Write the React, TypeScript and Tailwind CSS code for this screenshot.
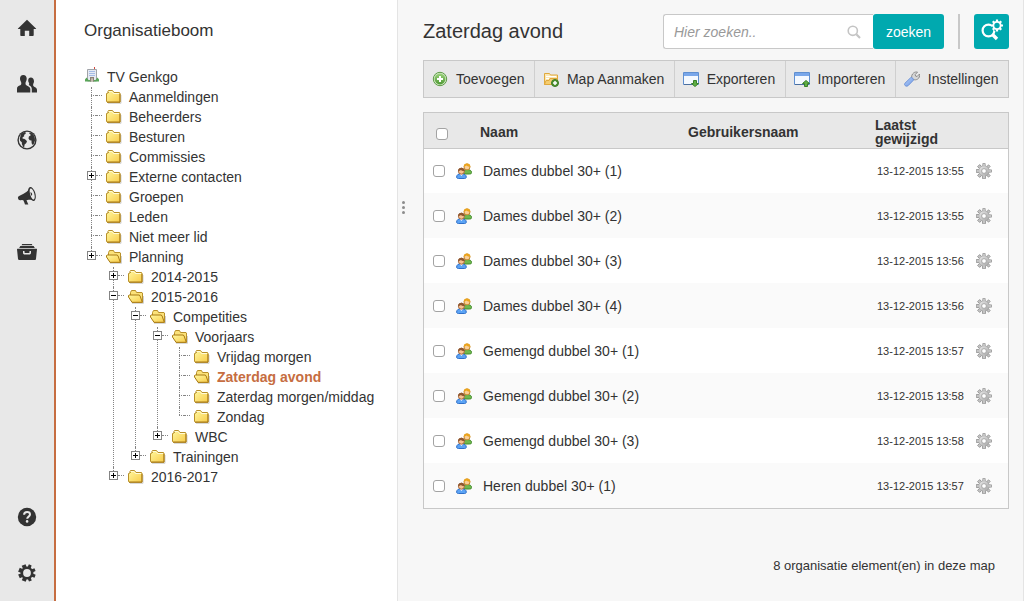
import React from 'react';

interface TreeNode {
    label: string;
    toggle?: 'plus' | 'minus';
    open?: boolean;
    selected?: boolean;
    children?: TreeNode[];
}

interface Team {
    name: string;
    modified: string;
}

const tree: TreeNode[] = [
    { label: 'Aanmeldingen' },
    { label: 'Beheerders' },
    { label: 'Besturen' },
    { label: 'Commissies' },
    { label: 'Externe contacten', toggle: 'plus' },
    { label: 'Groepen' },
    { label: 'Leden' },
    { label: 'Niet meer lid' },
    {
        label: 'Planning',
        toggle: 'plus',
        open: true,
        children: [
            { label: '2014-2015', toggle: 'plus' },
            {
                label: '2015-2016',
                toggle: 'minus',
                open: true,
                children: [
                    {
                        label: 'Competities',
                        toggle: 'minus',
                        open: true,
                        children: [
                            {
                                label: 'Voorjaars',
                                toggle: 'minus',
                                open: true,
                                children: [
                                    { label: 'Vrijdag morgen' },
                                    { label: 'Zaterdag avond', open: true, selected: true },
                                    { label: 'Zaterdag morgen/middag' },
                                    { label: 'Zondag' }
                                ]
                            },
                            { label: 'WBC', toggle: 'plus' }
                        ]
                    },
                    { label: 'Trainingen', toggle: 'plus' }
                ]
            },
            { label: '2016-2017', toggle: 'plus' }
        ]
    }
];

const teams: Team[] = [
    { name: 'Dames dubbel 30+ (1)', modified: '13-12-2015 13:55' },
    { name: 'Dames dubbel 30+ (2)', modified: '13-12-2015 13:55' },
    { name: 'Dames dubbel 30+ (3)', modified: '13-12-2015 13:56' },
    { name: 'Dames dubbel 30+ (4)', modified: '13-12-2015 13:56' },
    { name: 'Gemengd dubbel 30+ (1)', modified: '13-12-2015 13:57' },
    { name: 'Gemengd dubbel 30+ (2)', modified: '13-12-2015 13:58' },
    { name: 'Gemengd dubbel 30+ (3)', modified: '13-12-2015 13:58' },
    { name: 'Heren dubbel 30+ (1)', modified: '13-12-2015 13:57' }
];

/* Gradients shared by the coloured icons */
const IconDefs = () => (
    <svg width="0" height="0" className="absolute" aria-hidden="true">
        <defs>
            <linearGradient id="folder" x1="0" y1="0" x2="1" y2="1">
                <stop offset="0" stopColor="#fff8a0" />
                <stop offset="1" stopColor="#f8cc4a" />
            </linearGradient>
            <linearGradient id="steel" x1="0" y1="0" x2="1" y2="1">
                <stop offset="0" stopColor="#ececec" />
                <stop offset="1" stopColor="#a2a2a2" />
            </linearGradient>
            <linearGradient id="leaf" x1="0" y1="0" x2="0" y2="1">
                <stop offset="0" stopColor="#9bd27c" />
                <stop offset="1" stopColor="#4f9a34" />
            </linearGradient>
            <linearGradient id="sky" x1="0" y1="0" x2="1" y2="1">
                <stop offset="0" stopColor="#b9d2fa" />
                <stop offset="1" stopColor="#6c97e4" />
            </linearGradient>
        </defs>
    </svg>
);

const HomeIcon = () => (
    <svg viewBox="0 0 20 20" className="size-5" fill="#333">
        <path d="M10 1.8 1 10.4c-.3.4 0 .7.4.7h1.9v6.1c0 .5.3.8.8.8h3.7v-5.2h4.4V18h3.7c.5 0 .8-.3.8-.8v-6.1h1.9c.4 0 .7-.3.4-.7z" />
    </svg>
);

const UsersIcon = () => (
    <svg viewBox="0 0 20 20" className="size-5" fill="#333">
        <path d="M6.3 1C4.100 1 3 2.500 3 4.600c0 1 .2 2 .7 2.700.4.700.6 1.200.6 2.100 0 1.200-.5 1.700-1.700 2.200C1 12.300 0 13 0 14.700V18.500h13.300v-3.400c0-1.700-1.100-2.500-3.100-3.400-1.300-.6-1.700-1.100-1.700-2.300 0-.9.200-1.400.6-2.100.4-.7.600-1.700.6-2.700C9.700 2.500 8.500 1 6.300 1z" />
        <path d="M13.800 3.600c-1.600 0-2.600 1.200-2.600 2.900 0 .9.200 1.500.6 2.100.5.800.600 1.800-.1 2.500 2.100 1 3.100 2.200 3.100 4v3.400H20v-2.600c0-1.600-.8-2.300-2.400-3-1.100-.5-1.500-1-1.500-1.900 0-.8.200-1.300.5-1.900.3-.6.400-1.100.4-1.800 0-2.200-1.400-3.700-3.200-3.700z" />
    </svg>
);

const GlobeIcon = () => (
    <svg viewBox="0 0 20 20" className="size-5">
        <circle cx="10" cy="10" r="9.600" fill="#333" />
        <circle cx="10" cy="10" r="8.200" fill="#e8e8e8" />
        <path d="M4 4.200C5 3 6.500 2.200 8 1.900l1 1-.9 1.400-1.300.6.600 1-1.900 1.700.2 1.100 1.400.1 1.900 1.300 1 1.300-.9 1.900-1.500 1.200-.3 2.300-.9.500-1.500-3-.1-2.100-1.700-1.500-.3-2.300z" fill="#333" />
        <path d="M12.800 2.300c2.400.9 4.300 2.800 5 5.400l.2 2.900-1 2.900-1.300 1.500-1.100-1.800-.1-2.600-1.800-.4-1.200-1.600.4-2.200 1.700-1-.2-1.200-1.200-.4z" fill="#333" />
    </svg>
);

const MegaphoneIcon = () => (
    <svg viewBox="0 0 20 20" className="size-5">
        <path d="M13.500 1.300C12 4.500 8.500 7.500 2.600 9.700c-1.300.5-1.900 1.300-1.600 2.600.3 1.300 1 2 2.300 1.900l1.700-.2 1.300.2 1 2.200c.3.700.5 2.100 1.100 2.200h2.300c.6 0 .7-.4.3-.9l-1.500-3.500 1-.3c3.100-.5 5.600.1 7.100.8z" fill="#333" />
        <ellipse cx="14.900" cy="8" rx="3.500" ry="7.200" transform="rotate(-16 14.900 8)" fill="#333" />
        <ellipse cx="15.200" cy="8" rx="2.100" ry="5.600" transform="rotate(-16 15.200 8)" fill="#e8e8e8" />
        <path d="M13.300 6.200c1.700-.3 2.600 2.900 1 3.600z" fill="#333" />
    </svg>
);

const ArchiveIcon = () => (
    <svg viewBox="0 0 20 20" className="size-5" fill="#333">
        <path d="M5.200 2h9.600l.7 1.300h-11zM3.300 4h13.400l1.100 1.900H2.200zM.5 6.700h19c.4 0 .5.300.5.600l-1 9.500c-.1.800-.5 1.200-1.200 1.200H2.200c-.7 0-1.100-.4-1.200-1.200L0 7.300c0-.3.100-.6.5-.6zM6 9v1.500c0 1.400.6 2 1.900 2h4.200c1.300 0 1.900-.6 1.900-2V9h-1.500v1.200c0 .6-.2.8-.8.8H8.300c-.6 0-.8-.2-.8-.8V9z" />
    </svg>
);

const HelpIcon = () => (
    <svg viewBox="0 0 20 20" className="size-5">
        <circle cx="10" cy="10" r="9.200" fill="#333" />
        <path d="M7.100 7.800c0-1.700 1.300-2.700 3-2.700s2.900.9 2.900 2.400c0 2.200-2.800 2-2.800 4.300" fill="none" stroke="#e8e8e8" strokeWidth="2" />
        <circle cx="10.100" cy="14.400" r="1.300" fill="#e8e8e8" />
    </svg>
);

const CogIcon = () => (
    <svg viewBox="0 0 20 20" className="size-5">
        {[22, 67, 112, 157].map((angle) => (
            <path key={angle} d="M8.500 1.300h3l.6 17.400H7.900z" transform={`rotate(${angle} 10 10)`} fill="#333" />
        ))}
        <circle cx="10" cy="10" r="6.400" fill="#333" />
        <circle cx="10" cy="10" r="3.900" fill="#e8e8e8" />
    </svg>
);

const BuildingIcon = () => (
    <svg viewBox="0 0 14 15" className="h-[15px] w-3.5 shrink-0">
        <path d="M2.500 2.500h9V14h-9z" fill="#e6eaf2" stroke="#a0a3a8" />
        <path d="M4 4.500h6M4 6.500h6M4 8.500h6" stroke="#a5bce6" />
        <path d="M0 14.500v-2l1.500-2 2 2.500h7l2-2.500 1.500 2v2z" fill="#59a558" />
        <path d="M5 10h4v4.500H5z" fill="#8b8176" />
        <path d="M6.300 11.200h1.500V15H6.300z" fill="#d7d0c5" />
        <path d="M9.500 0v2" stroke="#d2473d" />
    </svg>
);

const FolderIcon = () => (
    <svg viewBox="0 0 16 14" className="h-3.5 w-4 shrink-0">
        <path d="M2 13.300h13V5" fill="none" stroke="#d0d0d0" />
        <path d="M.5 11.500v-8l1.500-.5 1-1.500-1 1V1l.5-.5h4L8 2.500h5.500l.5.500v9H1z" fill="url(#folder)" stroke="#b8902a" />
        <path d="M2.500 1.500H6l1.500 2h5.500" fill="none" stroke="#fffbd8" />
        <path d="M1 12.300h13V4" fill="none" stroke="#a87a15" />
    </svg>
);

const OpenFolderIcon = () => (
    <svg viewBox="0 0 16 14" className="h-3.5 w-4 shrink-0">
        <path d="M4 13.300h11.500V6" fill="none" stroke="#d0d0d0" />
        <path d="M2.500 7V2.500l1-2h4l1 2h5.500l.5.500v9.300H4z" fill="#fbe27a" stroke="#b8902a" />
        <path d="M.5 5.500 1 5h10l1 .7L14.300 12.300H4L.5 7z" fill="url(#folder)" stroke="#a87a15" />
    </svg>
);

const AddIcon = () => (
    <svg viewBox="0 0 16 16" className="size-4 shrink-0">
        <circle cx="8" cy="8" r="6.700" fill="#cfe6c2" stroke="#5d9c46" />
        <circle cx="8" cy="8" r="5.400" fill="url(#leaf)" />
        <path d="M8 5v6M5 8h6" stroke="#fff" strokeWidth="2" />
    </svg>
);

const FolderAddIcon = () => (
    <svg viewBox="0 0 16 16" className="size-4 shrink-0">
        <path d="M1.500 13.500v-11h5l1 1.500h7v9.500z" fill="#fbe7b4" stroke="#e0a93c" />
        <path d="M3 5.500h10M3 7.500h3" stroke="#fff" />
        <path d="M1.500 13.500 3 9.500h3l1-2h7.500v6z" fill="#f5cd70" stroke="#e0a93c" />
        <circle cx="12" cy="12" r="3.500" fill="#4f9333" stroke="#3c7a25" />
        <path d="M12 10v4M10 12h4" stroke="#fff" strokeWidth="1.500" />
    </svg>
);

const WindowIcon = ({ arrow }: { arrow: string }) => (
    <svg viewBox="0 0 16 16" className="size-4 shrink-0">
        <path d="M.5 1.500h15v12H.5z" fill="#f4f9ff" stroke="#5f8fd0" />
        <path d="M1 2h14v3H1z" fill="#79a7ea" />
        <path d="M1 13.500h14" stroke="#4b6f9f" />
        <path d={arrow} fill="#5fae43" stroke="#37802a" />
    </svg>
);

const WrenchIcon = () => (
    <svg viewBox="0 0 16 16" className="size-4 shrink-0">
        <path d="M8 8c-.9-2.200-.2-4.900 1.800-6.200 1.200-.8 2.400-1 3.700-.7L11.200 3.600l.4 1.500 1.500.4L15.500 3c.5 2.200-.3 4.100-1.900 5.100-1.300.8-2.600.9-3.800.5z" fill="#d7d7d7" stroke="#8b8b8b" />
        <path d="M1 12.200 6.700 6.700c1-.9 3.600 1.500 2.700 2.500L4.200 14.600c-1.900 1.700-4.900-.7-3.200-2.400z" fill="url(#sky)" stroke="#6f94d8" />
    </svg>
);

const TeamIcon = () => (
    <svg viewBox="0 0 16 16" className="size-4">
        <path d="M6.800 9.500c0-2 1.700-3 4.300-3s4.500 1 4.500 3c0 1.100-.8 1.500-2 1.500H8z" fill="#70b84e" stroke="#418a2c" />
        <circle cx="11" cy="3.900" r="3" fill="#f9cf98" stroke="#c98a2c" />
        <path d="M7.700 3.800C7.700 1.500 9 .4 11 .4s3.400 1.100 3.400 3.400c-1.500 0-3-.4-4.200-1.200-.5.700-1.400 1.200-2.500 1.200z" fill="#eba41c" />
        <path d="M.6 14.100c0-2.200 1.700-3.400 4.700-3.400s5 1.200 5 3.400c0 1.100-.9 1.400-2 1.400H2.500c-1.100 0-1.900-.3-1.900-1.400z" fill="#5ba3f5" stroke="#2d6fc9" />
        <path d="m3.800 11 1.600 2 1.600-2z" fill="#fff" />
        <circle cx="5.400" cy="8.200" r="3" fill="#f7c292" stroke="#a5683e" />
        <path d="M2 8.200c0-2.300 1.400-3.500 3.400-3.500s3.400 1.200 3.400 3.500C7.300 8.200 6 7.800 4.700 7c-.6.700-1.500 1.200-2.700 1.200z" fill="#8e5730" />
    </svg>
);

const GearIcon = () => (
    <svg viewBox="0 0 16 16" className="size-4">
        {[0, 45, 90, 135].map((angle) => (
            <path key={angle} d="M6.900.4h2.200l.4 15.200h-3z" transform={`rotate(${angle} 8 8)`} fill="#c4c4c4" stroke="#8e8e8e" strokeWidth=".8" />
        ))}
        <circle cx="8" cy="8" r="5.300" fill="url(#steel)" stroke="#a0a0a0" strokeWidth=".6" />
        <path d="M8 .8v3M8 12.200v3M.8 8h3M12.200 8h3" stroke="#c8c8c8" strokeWidth="1.600" />
        <circle cx="8" cy="8" r="2.400" fill="#fff" stroke="#a8a8a8" />
    </svg>
);

const SearchIcon = () => (
    <svg viewBox="0 0 14 14" className="size-3.5" fill="none" stroke="#c4c4c4">
        <circle cx="5.800" cy="5.800" r="4.600" strokeWidth="1.600" />
        <path d="m9.300 9.300 3.700 3.700" strokeWidth="2.200" />
    </svg>
);

const AdvancedSearchIcon = () => (
    <svg viewBox="0 0 24 24" className="size-6">
        <circle cx="8.500" cy="12.500" r="5.900" fill="none" stroke="#fff" strokeWidth="2.200" />
        <path d="m12.500 16.500 4.500 4.500" stroke="#fff" strokeWidth="3.400" />
        <circle cx="17" cy="7.500" r="5.800" fill="#00a9af" />
        {[0, 45, 90, 135].map((angle) => (
            <path key={angle} d="M15.900 1.500h2.200v12h-2.200z" transform={`rotate(${angle} 17 7.500)`} fill="#fff" />
        ))}
        <circle cx="17" cy="7.500" r="4.600" fill="#fff" />
        <circle cx="17" cy="7.500" r="2.700" fill="#00a9af" />
    </svg>
);

const RailButton = ({ label, children }: { label: string; children: React.ReactNode }) => (
    <button aria-label={label} className="flex h-14 w-full items-center justify-center">
        {children}
    </button>
);

const ToggleButton = ({ node }: { node: TreeNode }) => (
    <button aria-label={`${node.label} in- of uitklappen`} className="block size-[9px] bg-white">
        <svg viewBox="0 0 9 9" className="size-[9px]" shapeRendering="crispEdges">
            <path d="M.5.5h8v8h-8z" fill="none" stroke="#848484" />
            <path d={node.toggle === 'plus' ? 'M2 4.500h5M4.500 2v5' : 'M2 4.500h5'} stroke="#000" />
        </svg>
    </button>
);

const TreeList = ({ nodes }: { nodes: TreeNode[] }) => (
    <ul>
        {nodes.map((node, index) => (
            <li key={node.label} className="flex">
                <div className="flex w-[9px] shrink-0 flex-col">
                    <div className={`ml-1 border-l border-dotted border-[#848484] ${node.toggle ? 'h-1' : 'h-2'}`} />
                    {node.toggle ? (
                        <ToggleButton node={node} />
                    ) : (
                        <div className="ml-1 border-t border-dotted border-[#848484]" />
                    )}
                    {index < nodes.length - 1 && (
                        <div className="ml-1 flex-1 border-l border-dotted border-[#848484]" />
                    )}
                </div>
                <div>
                    <div className="flex h-5">
                        <div className="mt-2 w-1.5 border-t border-dotted border-[#848484]" />
                        <a
                            href="#"
                            className={`ml-1 flex gap-[7px] leading-5 whitespace-nowrap ${node.selected ? 'font-bold text-[#c66d41]' : ''}`}
                        >
                            <span className="mt-[3px]">{node.open ? <OpenFolderIcon /> : <FolderIcon />}</span>
                            {node.label}
                        </a>
                    </div>
                    {node.children && (
                        <div className="ml-[13px]">
                            <TreeList nodes={node.children} />
                        </div>
                    )}
                </div>
            </li>
        ))}
    </ul>
);

const ToolbarButton = ({ label, icon }: { label: string; icon: React.ReactNode }) => (
    <button className="flex flex-auto items-center gap-2 border-l border-[#cfcfcf] pl-2 whitespace-nowrap first:border-l-0">
        {icon}
        {label}
    </button>
);

const Checkbox = ({ label }: { label: string }) => (
    <input
        type="checkbox"
        aria-label={label}
        className="block size-3 appearance-none rounded-[3px] border border-[#a3a3a3] bg-white checked:bg-[#00a9af]"
    />
);

export default function App() {
    return (
        <div className="flex min-h-screen bg-[#f7f7f7] font-['Liberation_Sans',Arial,sans-serif] text-sm text-[#333]">
            <IconDefs />
            <nav className="flex w-14 shrink-0 flex-col justify-between border-r-2 border-[#c66d41] bg-[#e8e8e8]">
                <div>
                    <RailButton label="Home"><HomeIcon /></RailButton>
                    <RailButton label="Leden"><UsersIcon /></RailButton>
                    <RailButton label="Website"><GlobeIcon /></RailButton>
                    <RailButton label="Communicatie"><MegaphoneIcon /></RailButton>
                    <RailButton label="Archief"><ArchiveIcon /></RailButton>
                </div>
                <div>
                    <RailButton label="Help"><HelpIcon /></RailButton>
                    <RailButton label="Beheer"><CogIcon /></RailButton>
                </div>
            </nav>

            <aside className="w-[342px] shrink-0 border-r border-[#e4e4e4] bg-white pt-[21px] pl-7">
                <h2 className="text-[17px] leading-5">Organisatieboom</h2>
                <a href="#" className="mt-[26px] flex h-5 gap-2 pl-px leading-5">
                    <BuildingIcon />
                    TV Genkgo
                </a>
                <div className="pl-[3px]">
                    <TreeList nodes={tree} />
                </div>
            </aside>

            <div className="w-[11px] shrink-0">
                <div className="mt-[201px] flex flex-col items-center gap-0.5">
                    <span className="size-[3px] rounded-full bg-[#8c8c8c]" />
                    <span className="size-[3px] rounded-full bg-[#8c8c8c]" />
                    <span className="size-[3px] rounded-full bg-[#8c8c8c]" />
                </div>
            </div>

            <main className="min-w-0 flex-1 border-r border-[#e4e4e4] pt-3.5 pr-3.5 pl-3.5">
                <div className="flex items-center">
                    <h1 className="flex-1 pb-0.5 text-xl">Zaterdag avond</h1>
                    <form className="flex h-[35px]" onSubmit={(e) => e.preventDefault()}>
                        <div className="relative">
                            <input
                                type="text"
                                aria-label="Zoeken"
                                placeholder="Hier zoeken.."
                                className="h-full w-[210px] rounded-l-[3px] border border-r-0 border-[#c8c8c8] bg-white pr-8 pl-2.5 placeholder:text-[#999] placeholder:italic"
                            />
                            <span className="absolute top-[11px] right-3"><SearchIcon /></span>
                        </div>
                        <button type="submit" className="w-[71px] rounded-[3px] bg-[#00a9af] text-white">
                            zoeken
                        </button>
                    </form>
                    <div className="mx-3.5 h-[35px] w-0.5 bg-[#c8c8c8]" />
                    <button aria-label="Geavanceerd zoeken" className="flex size-[35px] items-center justify-center rounded-[3px] bg-[#00a9af] pb-1">
                        <AdvancedSearchIcon />
                    </button>
                </div>

                <div className="mt-[11px] flex h-[38px] border border-[#c8c8c8] bg-[#e8e8e8]">
                    <ToolbarButton label="Toevoegen" icon={<AddIcon />} />
                    <ToolbarButton label="Map Aanmaken" icon={<FolderAddIcon />} />
                    <ToolbarButton label="Exporteren" icon={<WindowIcon arrow="M10.500 9.500h3v3h2l-3.500 3-3.500-3h2z" />} />
                    <ToolbarButton label="Importeren" icon={<WindowIcon arrow="M10.500 15.500h3v-3h2l-3.500-3-3.500 3h2z" />} />
                    <ToolbarButton label="Instellingen" icon={<WrenchIcon />} />
                </div>

                <div className="mt-3.5 border border-[#c8c8c8] bg-white">
                    <table className="w-full table-fixed text-left">
                        <thead className="border-b border-[#c8c8c8] bg-[#e8e8e8]">
                            <tr className="h-[35px] leading-3.5">
                                <th className="w-7 pt-2 pl-3"><Checkbox label="Alles selecteren" /></th>
                                <th className="w-7" />
                                <th className="pt-1">Naam</th>
                                <th className="w-[187px] pt-1">Gebruikersnaam</th>
                                <th className="w-[98px] pt-1">Laatst gewijzigd</th>
                                <th className="w-[35px]" />
                            </tr>
                        </thead>
                        <tbody>
                            {teams.map((team) => (
                                <tr key={team.name} className="h-[45px] even:bg-[#fafafa]">
                                    <td className="pl-[9px]"><Checkbox label={team.name} /></td>
                                    <td className="pl-1"><TeamIcon /></td>
                                    <td className="pl-[3px]"><a href="#">{team.name}</a></td>
                                    <td />
                                    <td className="pt-0.5 pl-0.5 text-[11px] whitespace-nowrap">{team.modified}</td>
                                    <td className="pl-[3px]">
                                        <button aria-label={`Acties voor ${team.name}`} className="block"><GearIcon /></button>
                                    </td>
                                </tr>
                            ))}
                        </tbody>
                    </table>
                </div>

                <p className="mt-[47px] pr-3.5 text-right text-[13px] leading-5">8 organisatie element(en) in deze map</p>
            </main>
        </div>
    );
}
